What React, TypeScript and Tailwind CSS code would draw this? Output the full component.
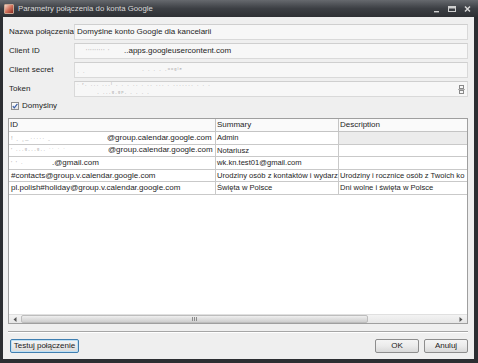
import React from 'react';

const font = "font-['Liberation_Sans',Arial,sans-serif]";

const Field: React.FC<{ label: string; children?: React.ReactNode }> = ({ label, children }) => (
  <div className="flex h-[16px] items-stretch">
    <div className="w-[65px] flex items-center text-[#1e1e1e]">{label}</div>
    <div className="flex-1 flex items-center bg-[#f7f7f7] border border-[#d9d9d9] border-t-[#cfcfcf] pl-[2px] overflow-hidden whitespace-nowrap text-[#1e1e1e]">
      {children}
    </div>
  </div>
);

const Faint: React.FC<{ children: React.ReactNode; className?: string }> = ({ children, className }) => (
  <span className={`text-[#a8a8a8] text-[6px] tracking-[1px] ${className ?? ''}`}>{children}</span>
);

const rows = [
  { id: <><Faint className="w-[96px] inline-block">{"! ˎ ¸  ̲ ·····    ˍ"}</Faint>@group.calendar.google.com</>, summary: 'Admin', desc: '', sel: true },
  { id: <><Faint className="w-[97px] inline-block">{"'    ···ᵍ···ᵍ··  ˙˙ ˙ ˙"}</Faint>@group.calendar.google.com</>, summary: 'Notariusz', desc: '' },
  { id: <><Faint className="w-[41px] inline-block">{"  ' '   ·"}</Faint>.@gmail.com</>, summary: 'wk.kn.test01@gmail.com', desc: '' },
  { id: '#contacts@group.v.calendar.google.com', summary: 'Urodziny osób z kontaktów i wydarz', desc: 'Urodziny i rocznice osób z Twoich ko' },
  { id: 'pl.polish#holiday@group.v.calendar.google.com', summary: 'Święta w Polsce', desc: 'Dni wolne i święta w Polsce' },
];

const Btn: React.FC<{ children: React.ReactNode; w: string; focus?: boolean }> = ({ children, w, focus }) => (
  <div
    className={`${w} h-[14px] flex items-center justify-center rounded-[2px] border ${
      focus ? 'border-[#3f7eb0] shadow-[inset_0_0_0_1px_#bfe0f5]' : 'border-[#8d8d8d]'
    } bg-gradient-to-b from-[#f4f4f4] via-[#ebebeb] to-[#d9d9d9] text-[#1a1a1a]`}
  >
    {children}
  </div>
);

export default function App() {
  return (
    <div className={`${font} w-[478px] h-[363px] bg-[#2c2e32] flex flex-col text-[8px] leading-none`}>
      {/* title bar */}
      <div className="h-[17px] flex items-center bg-gradient-to-b from-[#66696e] via-[#3c3f44] to-[#2e3034] pl-[4px] pr-[7px]">
        <div className="w-[10px] h-[10px] rounded-[1px] bg-gradient-to-br from-[#f2d6c8] via-[#d0705a] to-[#8a2a22] border border-[#c9a590]" />
        <span className="ml-[4px] text-[#dadada] text-[7.8px]">Parametry połączenia do konta Google</span>
        <div className="ml-auto flex items-center gap-[8px]">
          <svg width="7" height="8" viewBox="0 0 7 8"><rect x="1" y="6" width="5" height="1.4" fill="#cfcfcf" /></svg>
          <svg width="8" height="8" viewBox="0 0 8 8"><rect x="0.5" y="1.5" width="7" height="5" fill="none" stroke="#cfcfcf" /><rect x="0.5" y="1.5" width="7" height="2" fill="#cfcfcf" /></svg>
          <svg width="7" height="8" viewBox="0 0 7 8"><path d="M1 1.5 L6 6.5 M6 1.5 L1 6.5" stroke="#d6d6d6" strokeWidth="1.5" /></svg>
        </div>
      </div>

      {/* body */}
      <div className="flex-1 ml-[3px] mr-[4px] mb-[4px] bg-[#efefef] flex flex-col pt-[7px] pl-[6px] pr-[6px]">
        <div className="flex flex-col gap-[3px]">
          <Field label="Nazwa połączenia">Domyślne konto Google dla kancelarii</Field>
          <Field label="Client ID">
            <Faint className="w-[47px] inline-block pl-[9px]">{"''''''''' '"}</Faint>..apps.googleusercontent.com
          </Field>
          <Field label="Client secret">
            <Faint className="w-[65px] inline-block">{"ˌ             ˌ"}</Faint>
            <Faint>{"·  ·  ·  · ·ᵒᵒᵍˡᵉ"}</Faint>
          </Field>
          <Field label="Token">
            <div className="flex-1 flex flex-col justify-center gap-[2px] overflow-hidden">
              <Faint>{"ˑ ʳ· ··· ···ˡ   ·     ·  ·   ··        ·   ··     ···   ·   ·······     ·       ·  ·"}</Faint>
              <Faint className="pl-[20px]">{"·                 ···ᵍ·ᵍᵖ·         ·                ·  ·            ·"}</Faint>
            </div>
            <svg width="7" height="9" viewBox="0 0 7 9" className="mr-[2px] shrink-0">
              <rect x="1.5" y="0.5" width="4" height="3" fill="none" stroke="#8a8a8a" />
              <rect x="1.5" y="5.5" width="4" height="3" fill="none" stroke="#8a8a8a" />
              <path d="M0 4.5 H7" stroke="#b0b0b0" />
            </svg>
          </Field>
        </div>

        {/* checkbox */}
        <div className="mt-[4px] h-[10px] flex items-center pl-[2px]">
          <div className="w-[8px] h-[8px] border border-[#8f8f8f] bg-gradient-to-b from-[#ffffff] to-[#e4e4e4] flex items-center justify-center">
            <svg width="6" height="6" viewBox="0 0 6 6"><path d="M0.8 3.2 L2.3 4.8 L5.4 0.8" fill="none" stroke="#3a5fa8" strokeWidth="1.2" /></svg>
          </div>
          <span className="ml-[3px] text-[#1e1e1e]">Domyślny</span>
        </div>

        {/* table */}
        <div className="mt-[7px] -ml-[1px] h-[206px] border border-[#9f9f9f] bg-white flex flex-col">
          <div className="flex h-[13px] bg-[#fafafa] border-b border-[#c4c4c4] text-[#1e1e1e]">
            <div className="w-[207px] pl-[1px] flex items-center border-r border-[#c4c4c4]">ID</div>
            <div className="w-[123px] pl-[1px] flex items-center border-r border-[#c4c4c4]">Summary</div>
            <div className="flex-1 pl-[1px] flex items-center">Description</div>
          </div>
          {rows.map((r, i) => (
            <div key={i} className="flex h-[12.6px] border-b border-[#c9c9c9] text-[#1e1e1e] whitespace-nowrap">
              <div className="w-[207px] pl-[2px] flex items-center overflow-hidden border-r border-[#c9c9c9]">{r.id}</div>
              <div className="w-[123px] pl-[1px] flex items-center overflow-hidden border-r border-[#c9c9c9] text-[7.6px]">{r.summary}</div>
              <div className={`flex-1 pl-[1px] flex items-center overflow-hidden text-[7.6px] ${r.sel ? 'bg-[#ececec]' : ''}`}>{r.desc}</div>
            </div>
          ))}
          <div className="flex-1" />
          {/* horizontal scrollbar */}
          <div className="h-[9px] flex items-center bg-gradient-to-b from-[#f3f3f3] to-[#e6e6e6] border-t border-[#e0e0e0]">
            <div className="w-[12px] flex justify-center">
              <svg width="4" height="5" viewBox="0 0 4 5"><path d="M3.5 0 L0.5 2.5 L3.5 5 Z" fill="#555" /></svg>
            </div>
            <div className="w-[347px] h-[8px] rounded-[2px] border border-[#bdbdbd] bg-gradient-to-b from-[#efefef] via-[#dedede] to-[#cfcfcf] flex items-center justify-center">
              <svg width="5" height="4" viewBox="0 0 5 4"><path d="M0.5 0 V4 M2.5 0 V4 M4.5 0 V4" stroke="#8c8c8c" /></svg>
            </div>
            <div className="flex-1" />
            <div className="w-[12px] flex justify-center">
              <svg width="4" height="5" viewBox="0 0 4 5"><path d="M0.5 0 L3.5 2.5 L0.5 5 Z" fill="#555" /></svg>
            </div>
          </div>
        </div>

        {/* separator */}
        <div className="mt-[7px] -ml-[1px] border-t border-[#a6a6a6] border-b border-b-white" />

        {/* buttons */}
        <div className="mt-[6px] flex items-center">
          <Btn w="w-[69px] ml-[1px]" focus>Testuj połączenie</Btn>
          <div className="flex-1" />
          <Btn w="w-[44px]">OK</Btn>
          <div className="w-[5px]" />
          <Btn w="w-[44px]">Anuluj</Btn>
        </div>
      </div>
    </div>
  );
}
